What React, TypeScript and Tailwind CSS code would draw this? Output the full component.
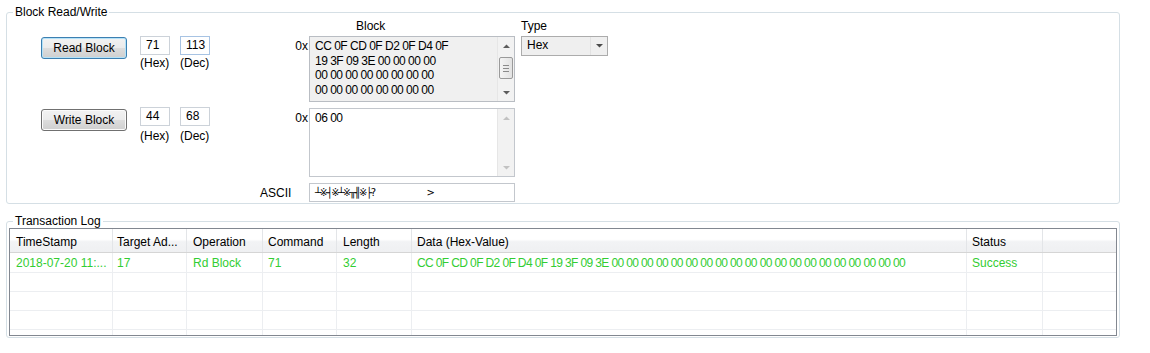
import React from "react";

const blockLines = [
  "CC 0F CD 0F D2 0F D4 0F",
  "19 3F 09 3E 00 00 00 00",
  "00 00 00 00 00 00 00 00",
  "00 00 00 00 00 00 00 00",
];

const logData =
  "CC 0F CD 0F D2 0F D4 0F 19 3F 09 3E 00 00 00 00 00 00 00 00 00 00 00 00 00 00 00 00 00 00 00 00";

const columns = [
  { w: "w-[103px]", pl: "pl-[6px]", head: "TimeStamp", value: "2018-07-20 11:..." },
  { w: "w-[74px]", pl: "pl-[4px]", head: "Target Ad...", value: "17" },
  { w: "w-[76px]", pl: "pl-[6px]", head: "Operation", value: "Rd Block" },
  { w: "w-[74px]", pl: "pl-[5px]", head: "Command", value: "71" },
  { w: "w-[75px]", pl: "pl-[6px]", head: "Length", value: "32" },
  { w: "w-[555px]", pl: "pl-[5px]", head: "Data (Hex-Value)", value: logData },
  { w: "w-[76px]", pl: "pl-[5px]", head: "Status", value: "Success" },
];

function Arrow({ dir, color }: { dir: "up" | "down"; color: string }) {
  return (
    <svg width="7" height="4" viewBox="0 0 7 4">
      <path d={dir === "up" ? "M0 4L3.5 0.5L7 4Z" : "M0 0L3.5 3.5L7 0Z"} fill={color} />
    </svg>
  );
}

function ScrollBar({ enabled }: { enabled: boolean }) {
  const color = enabled ? "#5c5c5c" : "#c2c2c2";
  return (
    <div className="flex w-[17px] flex-col border-l border-[#e6e6e6] bg-[#f2f2f2]">
      <div className="flex h-[17px] items-center justify-center">
        <Arrow dir="up" color={color} />
      </div>
      {enabled && (
        <div className="mx-[1px] mt-[3px] flex h-[22px] flex-col items-center justify-center gap-[2px] rounded-[2px] border border-[#9a9a9a] bg-[linear-gradient(to_right,#f4f4f4,#e2e2e2)]">
          <div className="h-[1px] w-[6px] bg-[#8a8a8a]" />
          <div className="h-[1px] w-[6px] bg-[#8a8a8a]" />
          <div className="h-[1px] w-[6px] bg-[#8a8a8a]" />
        </div>
      )}
      <div className="flex-1" />
      <div className="flex h-[17px] items-center justify-center">
        <Arrow dir="down" color={color} />
      </div>
    </div>
  );
}

function NumBox({ value, label, focus, gap }: { value: string; label: string; focus?: boolean; gap: string }) {
  return (
    <div className="flex w-[30px] flex-col">
      <div
        className={`h-[19px] border bg-white pl-[5px] pt-[1px] ${
          focus ? "border-[#a7c3e3]" : "border-[#ccd2d9]"
        }`}
      >
        {value}
      </div>
      <div className={`${gap} whitespace-nowrap`}>{label}</div>
    </div>
  );
}

function WinButton({ text, primary }: { text: string; primary?: boolean }) {
  return (
    <div
      className={`flex h-[22px] w-[86px] items-center justify-center rounded-[3px] border bg-[linear-gradient(to_bottom,#f2f2f2_0%,#ebebeb_50%,#dddddd_50%,#cfcfcf_100%)] ${
        primary
          ? "border-[#3c7fb1] shadow-[inset_0_0_0_1px_#b4e2f8]"
          : "border-[#707070] shadow-[inset_0_0_0_1px_#fbfbfb]"
      }`}
    >
      {text}
    </div>
  );
}

export default function App() {
  return (
    <div className="h-[353px] w-[1150px] overflow-hidden bg-white text-[12px] leading-[14px] text-black [font-family:'Liberation_Sans',Arial,sans-serif]">
      <fieldset className="ml-[6px] mt-[5px] h-[199px] w-[1114px] rounded-[3px] border border-[#d5dfe5]">
        <legend className="ml-[6px] px-[2px]">Block Read/Write</legend>
        <div className="flex">
          {/* read / write controls */}
          <div className="flex w-[248px] flex-col">
            <div className="mt-[17px] flex items-start">
              <div className="ml-[34px] mt-[1px]">
                <WinButton text="Read Block" primary />
              </div>
              <div className="ml-[13px] flex gap-[10px]">
                <NumBox value="71" label="(Hex)" gap="mt-[1px]" />
                <NumBox value="113" label="(Dec)" gap="mt-[1px]" focus />
              </div>
            </div>
            <div className="mt-[37px] flex items-start">
              <div className="ml-[34px] mt-[2px]">
                <WinButton text="Write Block" />
              </div>
              <div className="ml-[13px] flex gap-[10px]">
                <NumBox value="44" label="(Hex)" gap="mt-[3px]" />
                <NumBox value="68" label="(Dec)" gap="mt-[3px]" />
              </div>
            </div>
          </div>

          {/* block data */}
          <div className="flex flex-col">
            <div className="h-[17px] pl-[101px]">Block</div>
            <div className="flex">
              <div className="w-[54px] pr-[1px] pt-[3px] text-right">0x</div>
              <div className="flex h-[66px] w-[206px] border border-[#b9bdc3] bg-[#f0f0f0]">
                <div className="flex-1 pl-[5px] pt-[2px] leading-[14.5px] tracking-[-0.5px]">
                  {blockLines.map((l, i) => (
                    <div key={i}>{l}</div>
                  ))}
                </div>
                <ScrollBar enabled />
              </div>
            </div>
            <div className="mt-[6px] flex">
              <div className="w-[54px] pr-[1px] pt-[3px] text-right">0x</div>
              <div className="flex h-[69px] w-[206px] border border-[#c3c7cd] bg-white">
                <div className="flex-1 pl-[5px] pt-[2px] leading-[14.5px] tracking-[-0.5px]">06 00</div>
                <ScrollBar enabled={false} />
              </div>
            </div>
            <div className="mt-[6px] flex">
              <div className="w-[54px] pl-[5px] pt-[3px]">ASCII</div>
              <div className="flex h-[19px] w-[206px] items-center border border-[#c3c7cd] bg-white pl-[5px] text-[10px] tracking-[-1.4px] [font-family:'DejaVu_Sans',sans-serif]">
                <span>┴※┤※┴※╥╢※├?</span>
                <span className="ml-[52px]">&gt;</span>
              </div>
            </div>
          </div>

          {/* type */}
          <div className="ml-[6px] flex flex-col">
            <div className="h-[17px]">Type</div>
            <div className="flex h-[20px] w-[87px] border border-[#acacac] bg-[#efefef]">
              <div className="flex-1 pl-[5px] pt-[1px]">Hex</div>
              <div className="flex w-[17px] items-center justify-center border-l border-[#e2e2e2]">
                <Arrow dir="down" color="#4a4a4a" />
              </div>
            </div>
          </div>
        </div>
      </fieldset>

      <fieldset className="ml-[6px] mt-[10px] h-[124px] w-[1114px] rounded-[3px] border border-[#d5dfe5]">
        <legend className="ml-[6px] px-[2px]">Transaction Log</legend>
        <div className="ml-[2px] h-[108px] w-[1108px] overflow-hidden border border-[#828790] bg-white">
          <div className="flex h-[24px] border-b border-[#d5d5d5] bg-[linear-gradient(to_bottom,#ffffff_0%,#ffffff_45%,#f2f3f5_55%,#eff0f2_100%)]">
            {columns.map((c) => (
              <div key={c.head} className={`${c.w} ${c.pl} shrink-0 whitespace-nowrap border-r border-[#e3e5e8] pt-[6px]`}>
                {c.head}
              </div>
            ))}
            <div className="flex-1" />
          </div>
          {[0, 1, 2, 3, 4].map((r) => (
            <div
              key={r}
              className={`flex border-b border-[#eceef1] text-[#32cd32] ${r === 0 ? "h-[20px]" : "h-[19px]"}`}
            >
              {columns.map((c) => (
                <div
                  key={c.head}
                  className={`${c.w} ${c.pl} shrink-0 overflow-hidden whitespace-nowrap border-r border-[#eceef1] pt-[3px] ${
                    c.head === "Data (Hex-Value)" ? "tracking-[-0.62px]" : ""
                  }`}
                >
                  {r === 0 ? c.value : ""}
                </div>
              ))}
              <div className="flex-1" />
            </div>
          ))}
        </div>
      </fieldset>
    </div>
  );
}
